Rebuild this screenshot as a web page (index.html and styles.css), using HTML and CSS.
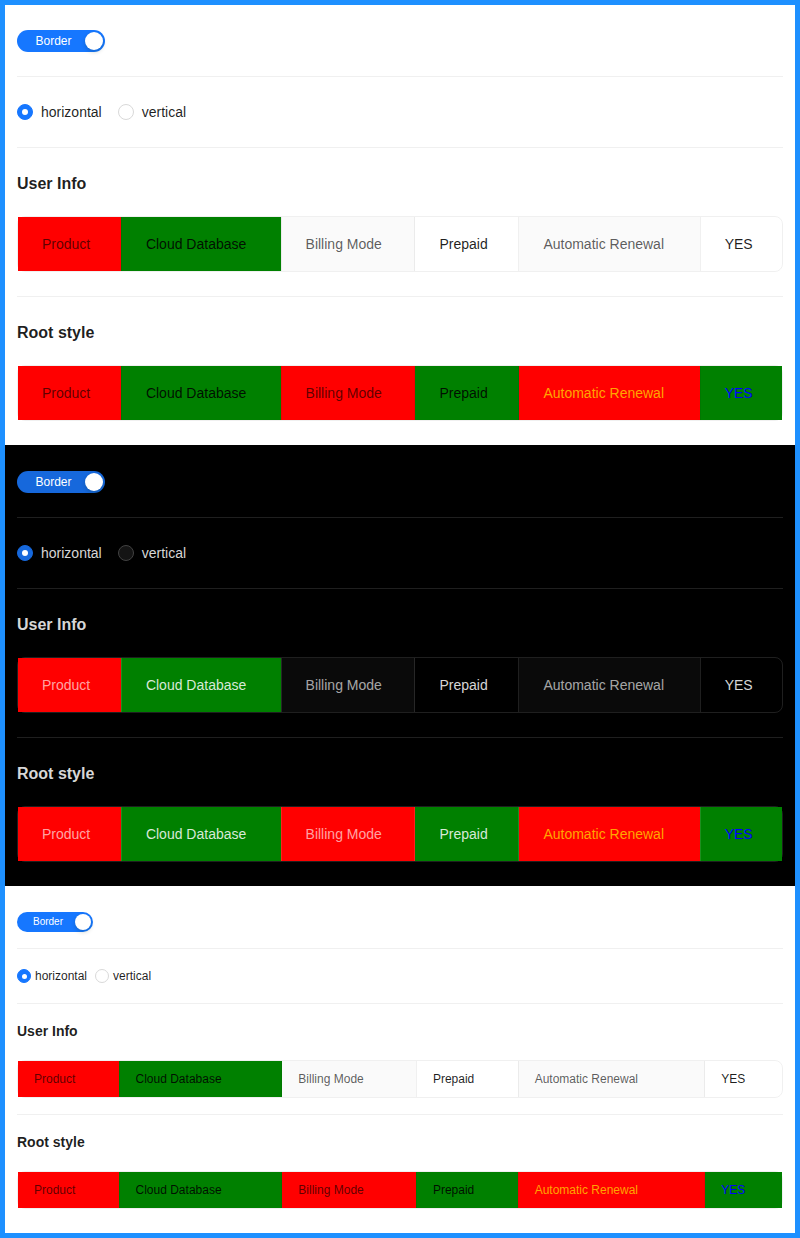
FILE: index.html
```html
<!DOCTYPE html>
<html lang="en">
<head>
<meta charset="utf-8">
<title>Descriptions</title>
<link rel="stylesheet" href="styles.css">
</head>
<body>
<div class="frame">

  <section class="demo light first">
    <div class="row"><span class="switch"><span class="switch-inner">Border</span><span class="knob"></span></span></div>
    <div class="divider"></div>
    <div class="radio-group">
      <label class="radio checked"><span class="radio-circle"></span><span class="radio-text">horizontal</span></label>
      <label class="radio"><span class="radio-circle"></span><span class="radio-text">vertical</span></label>
    </div>
    <div class="divider"></div>
    <div class="desc-title">User Info</div>
    <div class="desc-view">
      <table>
        <tr>
          <th class="label bg-red">Product</th><td class="content bg-green">Cloud Database</td>
          <th class="label">Billing Mode</th><td class="content">Prepaid</td>
          <th class="label">Automatic Renewal</th><td class="content last">YES</td>
        </tr>
      </table>
    </div>
    <div class="divider"></div>
    <div class="desc-title">Root style</div>
    <div class="desc-view">
      <table>
        <tr>
          <th class="label bg-red">Product</th><td class="content bg-green">Cloud Database</td>
          <th class="label bg-red">Billing Mode</th><td class="content bg-green">Prepaid</td>
          <th class="label bg-red c-orange">Automatic Renewal</th><td class="content bg-green c-blue last">YES</td>
        </tr>
      </table>
    </div>
  </section>

  <section class="demo dark">
    <div class="row"><span class="switch"><span class="switch-inner">Border</span><span class="knob"></span></span></div>
    <div class="divider"></div>
    <div class="radio-group">
      <label class="radio checked"><span class="radio-circle"></span><span class="radio-text">horizontal</span></label>
      <label class="radio"><span class="radio-circle"></span><span class="radio-text">vertical</span></label>
    </div>
    <div class="divider"></div>
    <div class="desc-title">User Info</div>
    <div class="desc-view">
      <table>
        <tr>
          <th class="label bg-red">Product</th><td class="content bg-green">Cloud Database</td>
          <th class="label">Billing Mode</th><td class="content">Prepaid</td>
          <th class="label">Automatic Renewal</th><td class="content last">YES</td>
        </tr>
      </table>
    </div>
    <div class="divider"></div>
    <div class="desc-title">Root style</div>
    <div class="desc-view">
      <table>
        <tr>
          <th class="label bg-red">Product</th><td class="content bg-green">Cloud Database</td>
          <th class="label bg-red">Billing Mode</th><td class="content bg-green">Prepaid</td>
          <th class="label bg-red c-orange">Automatic Renewal</th><td class="content bg-green c-blue last">YES</td>
        </tr>
      </table>
    </div>
  </section>

  <section class="demo light small">
    <div class="row"><span class="switch"><span class="switch-inner">Border</span><span class="knob"></span></span></div>
    <div class="divider"></div>
    <div class="radio-group">
      <label class="radio checked"><span class="radio-circle"></span><span class="radio-text">horizontal</span></label>
      <label class="radio"><span class="radio-circle"></span><span class="radio-text">vertical</span></label>
    </div>
    <div class="divider"></div>
    <div class="desc-title">User Info</div>
    <div class="desc-view">
      <table>
        <tr>
          <th class="label bg-red">Product</th><td class="content bg-green">Cloud Database</td>
          <th class="label">Billing Mode</th><td class="content">Prepaid</td>
          <th class="label">Automatic Renewal</th><td class="content last">YES</td>
        </tr>
      </table>
    </div>
    <div class="divider"></div>
    <div class="desc-title">Root style</div>
    <div class="desc-view">
      <table>
        <tr>
          <th class="label bg-red">Product</th><td class="content bg-green">Cloud Database</td>
          <th class="label bg-red">Billing Mode</th><td class="content bg-green">Prepaid</td>
          <th class="label bg-red c-orange">Automatic Renewal</th><td class="content bg-green c-blue last">YES</td>
        </tr>
      </table>
    </div>
  </section>

</div>
</body>
</html>
```

FILE: styles.css
```css
* { box-sizing: border-box; }

html, body {
  margin: 0;
  padding: 0;
  background: #fff;
}

body {
  font-family: "Liberation Sans", Arial, sans-serif;
  font-size: 14px;
  line-height: 22px;
}

.frame {
  border: 5px solid #1e90ff;
  height: 1238px;
  background: #fff;
}

.demo {
  padding: 26px 12px 24px;
  --text: rgba(0, 0, 0, 0.88);
  --label: rgba(0, 0, 0, 0.65);
  --label-bg: rgba(0, 0, 0, 0.02);
  --split: rgba(5, 5, 5, 0.06);
  --primary: #1677ff;
  --radio-border: #d9d9d9;
  --radio-bg: #ffffff;
  color: var(--text);
}

.demo.first { padding-top: 25px; }

.demo.dark {
  background: #000;
  --text: rgba(255, 255, 255, 0.85);
  --label: rgba(255, 255, 255, 0.65);
  --label-bg: rgba(255, 255, 255, 0.04);
  --split: rgba(253, 253, 253, 0.12);
  --primary: #1668dc;
  --radio-border: #424242;
  --radio-bg: #141414;
}

/* switch */
.row { display: flex; }

.switch {
  position: relative;
  display: inline-block;
  height: 22px;
  border-radius: 100px;
  background: var(--primary);
  padding: 0 24px 0 9px;
}

.switch-inner {
  display: block;
  width: 55px;
  text-align: center;
  color: #fff;
  font-size: 12px;
  line-height: 22px;
}

.knob {
  position: absolute;
  top: 2px;
  right: 2px;
  width: 18px;
  height: 18px;
  border-radius: 50%;
  background: #fff;
  box-shadow: 0 2px 4px 0 rgba(0, 35, 11, 0.2);
}

/* divider */
.divider {
  height: 0;
  border-top: 1px solid var(--split);
  margin: 24px 0;
}

/* radio */
.radio-group {
  display: flex;
  height: 22px;
  align-items: center;
}

.radio {
  display: inline-flex;
  align-items: center;
  margin-right: 8px;
  color: var(--text);
}

.radio-circle {
  position: relative;
  width: 16px;
  height: 16px;
  border-radius: 50%;
  border: 1px solid var(--radio-border);
  background: var(--radio-bg);
}

.radio.checked .radio-circle {
  background: var(--primary);
  border-color: var(--primary);
}

.radio.checked .radio-circle::after {
  content: "";
  position: absolute;
  left: 50%;
  top: 50%;
  width: 6px;
  height: 6px;
  margin: -3px 0 0 -3px;
  border-radius: 50%;
  background: #fff;
}

.radio-text {
  padding: 0 8px;
  line-height: 22px;
}

/* descriptions */
.desc-title {
  font-size: 16px;
  line-height: 24px;
  font-weight: 700;
  color: var(--text);
  margin-bottom: 20px;
}

.desc-view {
  border: 1px solid var(--split);
  border-radius: 8px;
}

.desc-view table {
  width: 100%;
  border-collapse: collapse;
  table-layout: auto;
}

.desc-view th,
.desc-view td {
  padding: 16px 24px;
  font-size: 14px;
  line-height: 22px;
  text-align: left;
  font-weight: 400;
  border-right: 1px solid var(--split);
  white-space: nowrap;
}

.desc-view .last { border-right: none; }

.label {
  color: var(--label);
  background: var(--label-bg);
}

.content {
  color: var(--text);
}

.desc-view .bg-red { background: #ff0000; }
.desc-view .bg-green { background: #008000; }
.desc-view .c-orange { color: #ffa500; }
.desc-view .c-blue { color: #0000ff; }

/* small / compact */
.small .switch {
  height: 20px;
  padding: 0 22px 0 8px;
}

.small .switch-inner {
  width: 46px;
  font-size: 10px;
  line-height: 20px;
}

.small .knob {
  width: 16px;
  height: 16px;
}

.small .divider { margin: 16px 0; }

.small .radio-group {
  font-size: 12px;
}

.small .radio { margin-right: 4px; }

.small .radio-circle {
  width: 14px;
  height: 14px;
}

.small .radio.checked .radio-circle::after {
  width: 5px;
  height: 5px;
  margin: -2.5px 0 0 -2.5px;
}

.small .radio-text {
  padding: 0 4px;
  font-size: 12px;
}

.small .desc-title {
  font-size: 14px;
  line-height: 22px;
  margin-bottom: 18px;
}

.small .desc-view th,
.small .desc-view td {
  padding: 8px 16px;
  font-size: 12px;
  line-height: 20px;
}
```
